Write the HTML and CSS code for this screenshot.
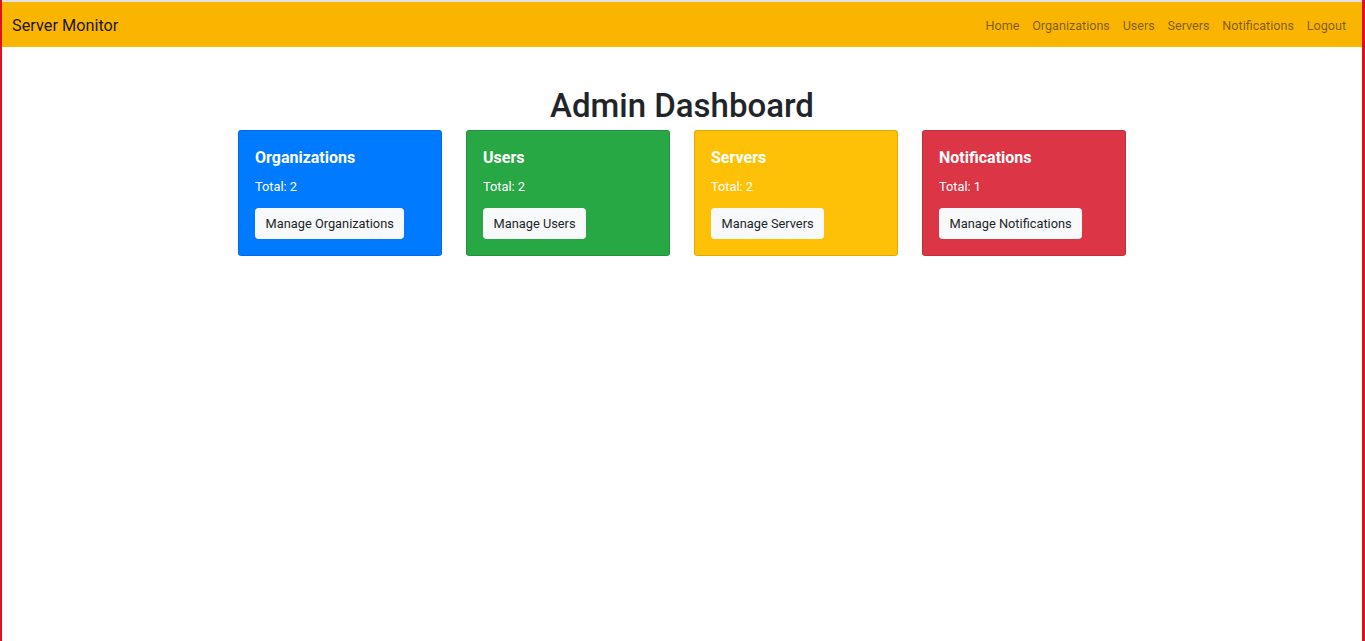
FILE: index.html
```html
<!DOCTYPE html>
<html lang="en">
<head>
<meta charset="utf-8">
<title>Admin Dashboard - Server Monitor</title>
<link rel="stylesheet" href="styles.css">
</head>
<body>
<div class="frame">
  <nav class="navbar">
    <a class="brand" href="#">Server Monitor</a>
    <ul class="nav">
      <li><a href="#">Home</a></li>
      <li><a href="#">Organizations</a></li>
      <li><a href="#">Users</a></li>
      <li><a href="#">Servers</a></li>
      <li><a href="#">Notifications</a></li>
      <li><a href="#">Logout</a></li>
    </ul>
  </nav>
  <main class="container">
    <h1 class="title">Admin Dashboard</h1>
    <div class="row">
      <div class="card card-blue">
        <h5 class="card-title">Organizations</h5>
        <p class="card-text">Total: 2</p>
        <a class="btn" href="#">Manage Organizations</a>
      </div>
      <div class="card card-green">
        <h5 class="card-title">Users</h5>
        <p class="card-text">Total: 2</p>
        <a class="btn" href="#">Manage Users</a>
      </div>
      <div class="card card-yellow">
        <h5 class="card-title">Servers</h5>
        <p class="card-text">Total: 2</p>
        <a class="btn" href="#">Manage Servers</a>
      </div>
      <div class="card card-red">
        <h5 class="card-title">Notifications</h5>
        <p class="card-text">Total: 1</p>
        <a class="btn" href="#">Manage Notifications</a>
      </div>
    </div>
  </main>
</div>
</body>
</html>
```

FILE: styles.css
```css
* { box-sizing: border-box; }

html, body {
  margin: 0;
  padding: 0;
  height: 100%;
}

body {
  font-family: Roboto, "Liberation Sans", sans-serif;
  font-size: 12.8px;
  line-height: 1.5;
  color: #212529;
  background: #fff;
}

.frame {
  min-height: 100vh;
  border-left: 2px solid #e01020;
  border-right: 3px solid #e01020;
}

.navbar {
  display: flex;
  align-items: center;
  justify-content: space-between;
  height: 47px;
  border-top: 2px solid #e2e2e2;
  background: #fab500;
  padding: 2px 9.6px 0 10px;
}

.brand {
  font-size: 16.3px;
  line-height: 24px;
  color: rgba(0, 0, 0, 0.9);
  text-decoration: none;
}

.nav {
  display: flex;
  list-style: none;
  margin: 0;
  padding: 0;
}

.nav a {
  display: block;
  padding: 6.4px 6.4px;
  font-size: 12.6px;
  line-height: 19.2px;
  color: rgba(0, 0, 0, 0.5);
  text-decoration: none;
}

.container {
  width: 912px;
  margin: 38.4px auto 0;
  padding: 0 12px;
}

.title {
  margin: 0 0 4.4px;
  padding-top: 2px;
  font-size: 33px;
  font-weight: 500;
  line-height: 38.4px;
  text-align: center;
  color: #212529;
}

.row {
  display: grid;
  grid-template-columns: repeat(4, 1fr);
  gap: 24px;
}

.card {
  border: 1px solid rgba(0, 0, 0, 0.125);
  border-radius: 3.2px;
  padding: 17px 16px 16px;
  color: #fff;
}

.card-blue { background: #007bff; }
.card-green { background: #28a745; }
.card-yellow { background: #ffc107; }
.card-red { background: #dc3545; }

.card-title {
  margin: 0 0 9.6px;
  font-size: 16px;
  font-weight: 700;
  line-height: 19.2px;
}

.card-text {
  margin: 0 0 11.8px;
  font-size: 12.8px;
  line-height: 19.2px;
}

.btn {
  display: inline-block;
  padding: 4.8px 9.6px;
  font-size: 12.8px;
  line-height: 19.2px;
  color: #212529;
  background: #f8f9fa;
  border: 1px solid #f8f9fa;
  border-radius: 3.2px;
  text-decoration: none;
}
```
